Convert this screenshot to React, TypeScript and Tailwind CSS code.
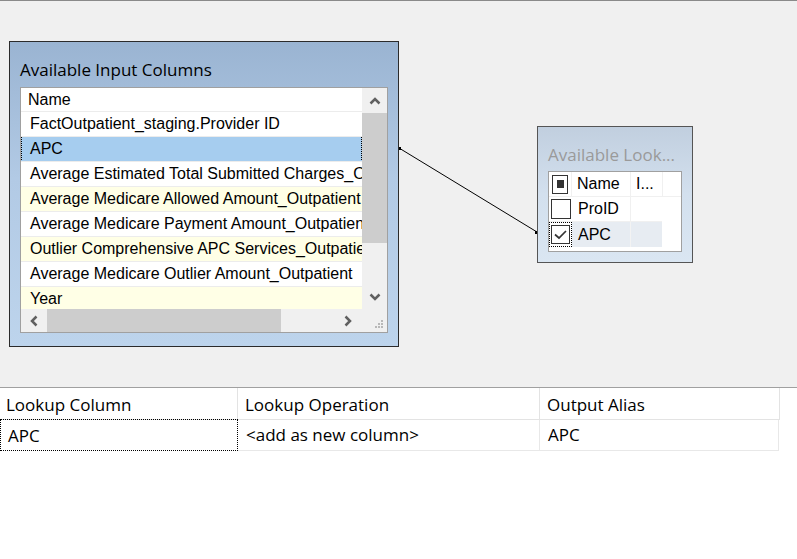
import React from "react";

const rows = [
  { t: "FactOutpatient_staging.Provider ID", y: false, sel: false },
  { t: "APC", y: false, sel: true },
  { t: "Average Estimated Total Submitted Charges_Outpatient", y: false, sel: false },
  { t: "Average Medicare Allowed Amount_Outpatient", y: true, sel: false },
  { t: "Average Medicare Payment Amount_Outpatient", y: false, sel: false },
  { t: "Outlier Comprehensive APC Services_Outpatient", y: true, sel: false },
  { t: "Average Medicare Outlier Amount_Outpatient", y: false, sel: false },
  { t: "Year", y: true, sel: false },
];

const Chevron = ({ dir }: { dir: "up" | "down" | "left" | "right" }) => {
  const d = {
    up: "M1.5 8.5 L6 4 L10.5 8.5",
    down: "M1.5 3.5 L6 8 L10.5 3.5",
    left: "M8.5 1.5 L4 6 L8.5 10.5",
    right: "M3.5 1.5 L8 6 L3.5 10.5",
  }[dir];
  return (
    <svg width="12" height="12" viewBox="0 0 12 12">
      <path d={d} fill="none" stroke="#606060" strokeWidth="2.5" />
    </svg>
  );
};

export default function App() {
  return (
    <div
      className="w-[797px] h-[559px] bg-white flex flex-col overflow-hidden"
      style={{ fontFamily: "'Liberation Sans', Arial, sans-serif" }}
    >
      <div className="h-[1px] bg-[#8a8a8a]" />
      <div className="relative h-[387px] bg-[#f0f0f0] border-b border-[#a0a0a0]">
        {/* connector */}
        <svg className="absolute left-0 top-0" width="797" height="387">
          <line x1="399" y1="147" x2="537" y2="231" stroke="#000" strokeWidth="1" />
          <rect x="398" y="146" width="3" height="3" fill="#000" />
          <rect x="535" y="230" width="3" height="3" fill="#000" />
        </svg>

        {/* Left panel */}
        <div className="absolute left-[9px] top-[40px] w-[390px] h-[306px] border border-[#2b2b2b] bg-[linear-gradient(to_bottom,#9ab4d2,#b2cae5_45%,#bdd4ec)] flex flex-col pl-[10px] pr-[10px]">
          <div
            className="h-[45px] flex items-end pb-[5px] text-[17px] text-black"
            style={{ fontFamily: "'Open Sans', 'Noto Sans', sans-serif" }}
          >
            Available Input Columns
          </div>
          <div className="w-[368px] h-[246px] border border-[#a0a0a0] bg-white flex flex-col">
            <div className="flex flex-1 min-h-0">
              <div className="w-[341px] flex flex-col overflow-hidden">
                <div className="h-[23px] shrink-0 flex items-center pl-[7px] text-[16px] text-black">Name</div>
                {rows.map((r, i) => (
                  <div
                    key={i}
                    className={`relative h-[25px] shrink-0 border-t border-[#ececec] flex items-center pl-[9px] text-[16px] text-black whitespace-nowrap overflow-hidden ${
                      r.sel ? "bg-[#a6cdef]" : r.y ? "bg-[#ffffe6]" : "bg-white"
                    }`}
                  >
                    {r.t}
                    {r.sel && (
                      <span className="absolute left-0 right-0 -top-[1px] -bottom-[1px] border border-dotted border-black" />
                    )}
                  </div>
                ))}
              </div>
              <div className="w-[25px] bg-[#f0f0f0] flex flex-col items-center">
                <div className="h-[25px] w-full flex items-center justify-center">
                  <Chevron dir="up" />
                </div>
                <div className="w-full h-[130px] bg-[#cdcdcd]" />
                <div className="flex-1" />
                <div className="h-[25px] w-full flex items-center justify-center">
                  <Chevron dir="down" />
                </div>
              </div>
            </div>
            <div className="h-[23px] flex bg-[#f0f0f0]">
              <div className="w-[26px] flex items-center justify-center">
                <Chevron dir="left" />
              </div>
              <div className="w-[234px] bg-[#cdcdcd]" />
              <div className="flex-1 flex items-center justify-end pr-[8px]">
                <Chevron dir="right" />
              </div>
              <div className="w-[25px] flex items-end justify-end pr-[3px] pb-[3px]">
                <svg width="10" height="10" viewBox="0 0 10 10">
                  <rect x="7" y="1" width="2" height="2" fill="#b8b8b8" />
                  <rect x="4" y="4" width="2" height="2" fill="#b8b8b8" />
                  <rect x="7" y="4" width="2" height="2" fill="#b8b8b8" />
                  <rect x="1" y="7" width="2" height="2" fill="#b8b8b8" />
                  <rect x="4" y="7" width="2" height="2" fill="#b8b8b8" />
                  <rect x="7" y="7" width="2" height="2" fill="#b8b8b8" />
                </svg>
              </div>
            </div>
          </div>
        </div>

        {/* Right panel */}
        <div className="absolute left-[537px] top-[125px] w-[156px] h-[137px] border border-[#555555] bg-[linear-gradient(to_bottom,#c1cfdf,#d3e0ee_50%,#dae6f2)] flex flex-col pl-[10px]">
          <div
            className="h-[44px] flex items-end pb-[4px] text-[17px] text-[#9a9a9a] whitespace-nowrap"
            style={{ fontFamily: "'Open Sans', 'Noto Sans', sans-serif" }}
          >
            Available Look...
          </div>
          <div className="w-[134px] h-[81px] border border-[#a0a0a0] bg-white flex flex-col text-[16px] text-black">
            <div className="h-[25px] flex border-b border-[#f0f0f0]">
              <div className="w-[23px] border-r border-[#f0f0f0] flex items-center justify-center">
                <div className="w-[16px] h-[19px] border border-[#333] flex items-center justify-center">
                  <div className="w-[7px] h-[8px] bg-[#333]" />
                </div>
              </div>
              <div className="w-[59px] border-r border-[#f0f0f0] flex items-center pl-[5px]">Name</div>
              <div className="w-[32px] border-r border-[#f0f0f0] flex items-center pl-[5px]">I...</div>
            </div>
            <div className="h-[25px] flex">
              <div className="w-[113px] flex border-b border-[#f0f0f0]">
                <div className="w-[23px] flex items-center justify-center">
                  <div className="w-[20px] h-[20px] border border-[#333] bg-white" />
                </div>
                <div className="w-[59px] border-r border-[#f0f0f0] flex items-center pl-[6px]">ProID</div>
                <div className="w-[31px]" />
              </div>
            </div>
            <div className="h-[25px] flex">
              <div className="w-[113px] flex bg-[#e7ecf2]">
                <div className="w-[23px] flex items-center justify-center border border-dotted border-black bg-white">
                  <div className="w-[19px] h-[19px] border border-[#333] flex items-center justify-center">
                    <svg width="15" height="15" viewBox="0 0 15 15">
                      <path d="M2 7.5 L6 11 L13 4" fill="none" stroke="#333" strokeWidth="1.7" />
                    </svg>
                  </div>
                </div>
                <div className="w-[59px] border-r border-[#f3f3f3] flex items-center pl-[6px]">APC</div>
                <div className="w-[31px]" />
              </div>
            </div>
          </div>
        </div>
      </div>

      {/* Grid */}
      <div
        className="flex flex-col text-[17px] text-black"
        style={{ fontFamily: "'Open Sans', 'Noto Sans', sans-serif" }}
      >
        <div className="flex h-[32px] w-[780px] border-b border-[#e3e3e3]">
          <div className="w-[238px] border-r border-[#e3e3e3] flex items-center pl-[6px] pt-[2px]">Lookup Column</div>
          <div className="w-[302px] border-r border-[#e3e3e3] flex items-center pl-[7px] pt-[2px]">Lookup Operation</div>
          <div className="w-[240px] border-r border-[#e3e3e3] flex items-center pl-[7px] pt-[2px]">Output Alias</div>
        </div>
        <div className="flex h-[31px] w-[779px]">
          <div className="w-[238px] -mt-[1px] h-[32px] border border-dotted border-black flex items-center pl-[7px] pt-[1px]">APC</div>
          <div className="w-[302px] border-r border-b border-[#e8e8e8] flex items-center pl-[8px]">&lt;add as new column&gt;</div>
          <div className="w-[239px] border-r border-b border-[#e8e8e8] flex items-center pl-[8px]">APC</div>
        </div>
      </div>
    </div>
  );
}
